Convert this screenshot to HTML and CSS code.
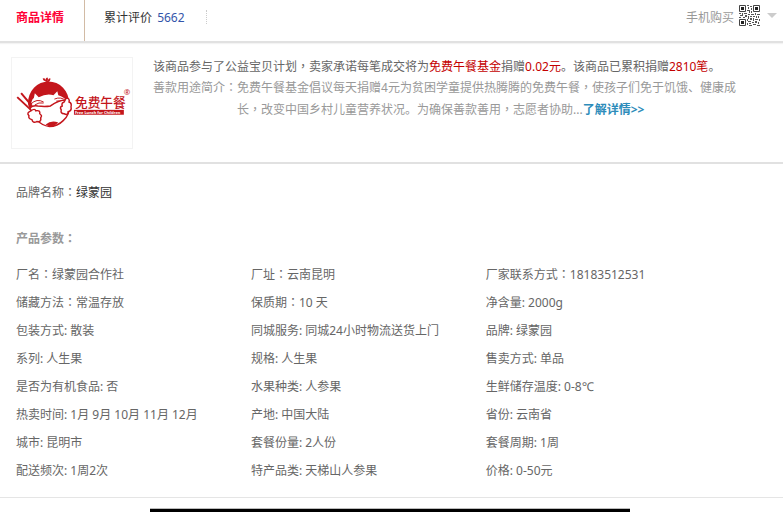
FILE: index.html
```
<!DOCTYPE html>
<html lang="zh-CN">
<head>
    <meta charset="UTF-8">
    <meta name="viewport" content="width=device-width, initial-scale=1.0">
    <title>商品详情</title>
    <link rel="stylesheet" href="styles.css">
</head>
<body>
    <nav class="tabbar">
        <a class="tab selected" href="#detail">商品详情</a>
        <a class="tab" href="#reviews">累计评价 <em class="count">5662</em></a>
        <a class="mobile-buy" href="#mobile">
            手机购买
            <svg class="qrcode" width="21" height="21" viewBox="0 0 21 21" aria-hidden="true">
                <g fill="none" stroke="#444">
                    <path d="M.5 .5h6v6h-6zM14.500 .5h6v6h-6zM.5 14.500h6v6h-6z"/>
                </g>
                <path fill="#222" d="M2 2h3v3h-3zM16 2h3v3h-3zM2 16h3v3h-3z"/>
                <path fill="#555" d="M8 0h2v1h-2zM11 1h2v1h-2zM9 2h1v2h-1zM12 3h1v2h-1zM8 5h3v1h-3zM10 6h1v2h-1zM12 6h1v2h-1zM0 8h2v1h-2zM3 8h1v2h-1zM5 8h3v1h-3zM1 10h3v1h-3zM6 10h2v2h-2zM9 9h2v1h-2zM12 9h3v1h-3zM16 8h1v2h-1zM18 9h3v1h-3zM0 12h2v1h-2zM4 12h2v1h-2zM9 11h1v3h-1zM11 11h2v1h-2zM14 11h2v1h-2zM17 11h1v2h-1zM19 11h1v2h-1zM8 14h1v2h-1zM11 13h2v2h-2zM14 13h1v3h-1zM16 14h3v1h-3zM20 14h1v2h-1zM9 16h3v1h-3zM13 17h2v1h-2zM16 16h2v2h-2zM19 17h1v2h-1zM8 18h1v2h-1zM10 18h2v1h-2zM10 20h3v1h-3zM14 19h3v1h-3zM18 20h3v1h-3z"/>
            </svg>
            <span class="arrow"></span>
        </a>
    </nav>

    <main class="content" id="detail">
        <section class="charity">
            <svg class="charity-logo" width="122" height="92" viewBox="11 57 122 92" role="img" aria-label="免费午餐">
                <!-- head -->
                <path fill="#c4161c" d="M45 81q-3-1-3-3q3-1 3 2q0-3 2-3q1 1 0 4q1-4 3-3q0 3-3 4z"/>
                <path fill="#c4161c" d="M27 103a21 22 0 0 1 42 0l-1 4l-38 2q-3-2-3-6z"/>
                <!-- face -->
                <path fill="#fff" d="M30 108q0-8 3-10l1-5l4 4q8-4 15-2l4-4l1 4q7 2 9 7l1 7q-1 8-6 12q-6 6-14 6q-9-1-13-6q-5-6-5-13z"/>
                <path fill="none" stroke="#c4161c" stroke-width="1" d="M30 104q6-6 13-2M34 105q4-3 9-2M54 99q7-3 12 2M56 101q5-1 9 2"/>
                <!-- mask -->
                <path fill="#fff" stroke="#c4161c" stroke-width="1.500" d="M29 108q3-3 8-2q7 1 13 0q8-6 16-6l3 6q1 9-6 15q-6 6-14 6q-8-1-12-6q-6-5-8-13z"/>
                <path fill="#c4161c" d="M45 125q6-5 13-2q-5 5-9 4z"/>
                <!-- hands -->
                <path fill="#fff" stroke="#c4161c" stroke-width="1.500" d="M30 111q4-3 5 0q5-1 4 3q3 2 1 4q1 5-4 4q-4 2-5-2q-4-1-3-4q-3-3 2-5zM66 98q4 0 3 4q3 1 2 5q1 4-3 5q0 4-4 2q-4 0-3-4q-2-3 1-4q-1-3 2-4z"/>
                <path stroke="#c4161c" stroke-width="2" d="M16 97l14 13M20 93l11 13"/>
                <text class="logo-name" x="75" y="107">免费午餐</text>
                <rect x="74" y="110" width="51" height="5" fill="#c4161c"/>
                <text class="logo-sub" x="75" y="114">Free Lunch for Children</text>
                <text class="logo-reg" x="125" y="95">®</text>
            </svg>
            <div class="charity-info">
                <p class="charity-title">该商品参与了公益宝贝计划<span class="punct" lang="zh-TW">，</span>卖家承诺每笔成交将为<em class="red">免费午餐基金</em>捐赠<em class="red">0.02元</em>。该商品已累积捐赠<em class="red">2810笔</em>。</p>
                <div class="charity-use">
                    <span class="use-label">善款用途简介<span class="punct" lang="zh-TW">：</span></span>
                    <p class="use-text">免费午餐基金倡议每天捐赠4元为贫困学童提供热腾腾的免费午餐<span class="punct" lang="zh-TW">，</span>使孩子们免于饥饿、健康成长<span class="punct" lang="zh-TW">，</span>改变中国乡村儿童营养状况。为确保善款善用<span class="punct" lang="zh-TW">，</span>志愿者协助...<a class="more" href="#charity">了解详情&gt;&gt;</a></p>
                </div>
            </div>
        </section>

        <section class="params">
            <p class="brand">品牌名称<span class="punct" lang="zh-TW">：</span><a class="brand-name" href="#brand">绿蒙园</a></p>
            <h2 class="params-title">产品参数<span class="punct" lang="zh-TW">：</span></h2>
            <ul class="params-list">
                <li>厂名<span class="punct" lang="zh-TW">：</span>绿蒙园合作社</li>
                <li>厂址<span class="punct" lang="zh-TW">：</span>云南昆明</li>
                <li>厂家联系方式<span class="punct" lang="zh-TW">：</span>18183512531</li>
                <li>储藏方法<span class="punct" lang="zh-TW">：</span>常温存放</li>
                <li>保质期<span class="punct" lang="zh-TW">：</span>10 天</li>
                <li>净含量: 2000g</li>
                <li>包装方式: 散装</li>
                <li>同城服务: 同城24小时物流送货上门</li>
                <li>品牌: 绿蒙园</li>
                <li>系列: 人生果</li>
                <li>规格: 人生果</li>
                <li>售卖方式: 单品</li>
                <li>是否为有机食品: 否</li>
                <li>水果种类: 人参果</li>
                <li>生鲜储存温度: 0-8℃</li>
                <li>热卖时间: 1月 9月 10月 11月 12月</li>
                <li>产地: 中国大陆</li>
                <li>省份: 云南省</li>
                <li>城市: 昆明市</li>
                <li>套餐份量: 2人份</li>
                <li>套餐周期: 1周</li>
                <li>配送频次: 1周2次</li>
                <li>特产品类: 天梯山人参果</li>
                <li>价格: 0-50元</li>
            </ul>
        </section>

        <section class="description">
            <div class="banner"></div>
        </section>
    </main>
</body>
</html>
```
FILE: styles.css
```
* {
    box-sizing: border-box;
    margin: 0;
    padding: 0;
}
body {
    display: flex;
    flex-direction: column;
    min-height: 100vh;
    background: #fff;
    color: #666;
    font: 12px/20px "Noto Sans", "Noto Sans CJK SC", sans-serif;
}
a {
    color: inherit;
    text-decoration: none;
}
em {
    font-style: normal;
}
ul {
    list-style: none;
}
/* centred full-width comma and colon */
.punct {
    font-family: "Noto Sans CJK TC", sans-serif;
    line-height: 1;
}

/* tab bar */
.tabbar {
    display: flex;
    height: 43px;
    border-bottom: 2px solid #e1e1e1;
    box-shadow: 0 1px 1px #f3f3f3;
}
.tab {
    position: relative;
    padding: 0 22px 0 19px;
    line-height: 36px;
    color: #333;
}
.tab::after {
    content: "";
    position: absolute;
    top: 10px;
    right: 0;
    height: 14px;
    border-right: 1px dotted #ccc;
}
.tab.selected {
    padding: 0 20px 0 16px;
    border-right: 1px solid #d2bba5;
    color: #ff0036;
    font-weight: bold;
}
.tab.selected::after {
    display: none;
}
.count {
    margin-left: 2px;
    color: #3355aa;
}
.mobile-buy {
    display: flex;
    align-items: flex-start;
    gap: 5px;
    margin-left: auto;
    padding-right: 6px;
    line-height: 36px;
    color: #999;
}
.qrcode {
    margin-top: 5px;
}
.arrow {
    margin: 13px 0 0 2px;
    border: 5px solid transparent;
    border-top-color: #ccc;
    border-bottom: 0;
}

/* charity block */
.content {
    display: flex;
    flex-direction: column;
    flex: 1;
}
.charity {
    display: flex;
    gap: 20px;
    padding: 14px 40px 13px 11px;
    border-bottom: 2px solid #e1e1e1;
}
.charity-logo {
    flex: none;
    border: 1px solid #f3f3f3;
}
.logo-name {
    fill: #c4161c;
    font-size: 13px;
    font-weight: 500;
}
.logo-sub {
    fill: #fff;
    font-size: 4px;
    font-weight: bold;
}
.logo-reg {
    fill: #c4161c;
    font-size: 8px;
}
.charity-use {
    display: flex;
    color: #999;
    line-height: 22px;
}
.use-label {
    flex: none;
}
.red {
    color: #c40000;
}
.more {
    color: #2d8cba;
    font-weight: bold;
}

/* product parameters */
.params {
    padding: 19px 0 12px;
    border-bottom: 1px solid #e5e5e5;
}
.brand {
    padding-left: 16px;
}
.brand-name {
    color: #333;
}
.params-title {
    margin: 26px 0 12px;
    padding-left: 16px;
    font-size: 12px;
    color: #999;
}
.params-list {
    display: grid;
    grid-template-columns: repeat(3, 1fr);
    width: 90%;
}
.params-list li {
    padding-left: 16px;
    line-height: 28px;
    white-space: nowrap;
}

.description {
    display: flex;
    flex: 1;
    justify-content: center;
    padding: 10px 3px 0 0;
}
.banner {
    width: 480px;
    border-top: 1px solid #bbb;
    background: #000;
}
```
